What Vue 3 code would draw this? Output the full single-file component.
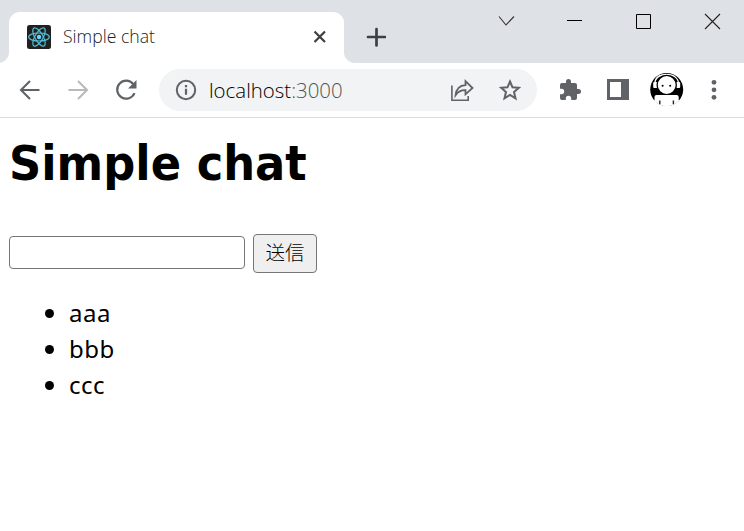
<script setup>
import { ref } from 'vue'

const messages = ref(['aaa', 'bbb', 'ccc'])
const draft = ref('')

function send() {
  if (!draft.value) return
  messages.value.push(draft.value)
  draft.value = ''
}
</script>

<template>
  <div class="window">
    <header class="tabstrip">
      <div class="tab">
        <svg class="favicon" viewBox="0 0 24 24">
          <rect width="24" height="24" rx="2.5" fill="#20201f" />
          <g fill="none" stroke="#53bdda" stroke-width="1.2">
            <ellipse cx="12" cy="12" rx="10.3" ry="4" />
            <ellipse cx="12" cy="12" rx="10.3" ry="4" transform="rotate(60 12 12)" />
            <ellipse cx="12" cy="12" rx="10.3" ry="4" transform="rotate(120 12 12)" />
          </g>
          <circle cx="12" cy="12" r="2.2" fill="#61dafb" />
        </svg>
        <span class="tab-title"><span class="fit">Simple chat</span></span>
        <svg class="tab-close" viewBox="0 0 14 14"><path d="M1.5 1.5 12 12M12 1.5 1.5 12" stroke="#3c4043" stroke-width="2.2" /></svg>
      </div>
      <svg class="plus" viewBox="0 0 20 20"><path d="M10.5 2V18.5M2 10H19" stroke="#3c4043" stroke-width="2.7" stroke-linecap="round" /></svg>
      <div class="controls">
        <svg viewBox="0 0 18 18"><path d="M2 4.5 9 13 17 4.5" fill="none" stroke="#333" stroke-width="1.1" /></svg>
        <svg viewBox="0 0 18 18"><path d="M1 8.5H16" stroke="#000" /></svg>
        <svg viewBox="0 0 18 18"><path d="M1.5 2.5H15.5V16.5H1.5Z" fill="none" stroke="#000" /></svg>
        <svg viewBox="0 0 18 18"><path d="M1 2 16 17M16 2 1 17" stroke="#222" stroke-width="1.1" /></svg>
      </div>
    </header>

    <nav class="toolbar">
      <svg class="nav-icon back" viewBox="0 0 24 24"><path d="M21.5 12H4M12 3 3 12 12 21" fill="none" stroke="#5f6368" stroke-width="2.1" /></svg>
      <svg class="nav-icon forward" viewBox="0 0 24 24"><path d="M2.5 12H20M12 3 21 12 12 21" fill="none" stroke="#bababa" stroke-width="2.1" /></svg>
      <svg class="nav-icon reload" viewBox="0 0 24 24">
        <path d="M19.2 6A9 9 0 1 0 20.5 15.1" fill="none" stroke="#5f6368" stroke-width="2.2" />
        <path d="M22.5 2V10.5H14Z" fill="#5f6368" />
      </svg>
      <div class="omnibox">
        <svg class="info" viewBox="0 0 22 22">
          <circle cx="11" cy="11" r="9.2" fill="none" stroke="#5f6368" stroke-width="2" />
          <path d="M11 6V8.2M11 9.8V15.8" stroke="#5f6368" stroke-width="2.2" />
        </svg>
        <span class="url"><span class="fit">localhost<span class="port">:3000</span></span></span>
        <svg class="share" viewBox="0 0 24 24" fill="none" stroke="#5f6368">
          <path d="M1.9 7.5V22.2H18.2V18" stroke-width="1.6" />
          <path d="M5.6 17.2C6.3 10.6 10 7.5 15.5 7.2V3.2L22.5 10 15.5 16.3V12.2C11 12 8.2 13.5 5.6 17.2Z" stroke-width="1.8" />
        </svg>
        <svg class="star" viewBox="0 0 24 24"><path d="M12 3.5 14.5 9.3 20.8 9.8 16 14 17.5 20.3 12 16.9 6.5 20.3 8 14 3.2 9.8 9.5 9.3Z" fill="none" stroke="#5f6368" stroke-width="2" /></svg>
      </div>
      <svg class="puzzle" viewBox="0 0 24 24"><path fill="#5f6368" d="M20.5 11H19V7a2 2 0 0 0-2-2h-4V3.5a2.5 2.5 0 0 0-5 0V5H4a2 2 0 0 0-2 2v3.8h1.5a2.7 2.7 0 0 1 0 5.4H2V20a2 2 0 0 0 2 2h3.8v-1.5a2.7 2.7 0 0 1 5.4 0V22H17a2 2 0 0 0 2-2v-4h1.5a2.5 2.5 0 0 0 0-5z" /></svg>
      <svg class="panel" viewBox="0 0 22 22"><path fill="#5f6368" fill-rule="evenodd" d="M0 0H22V21H0ZM3 3V18H14V3Z" /></svg>
      <svg class="avatar" viewBox="0 0 34 34">
        <defs><clipPath id="face"><circle cx="16.7" cy="16.5" r="16.5" /></clipPath></defs>
        <g clip-path="url(#face)">
          <rect width="34" height="34" fill="#000" />
          <path d="M4.7 12C4.7 5 9.5 1.5 16.7 1.5S28.7 5 28.7 12" fill="none" stroke="#fff" stroke-width="1.3" />
          <rect x="3.2" y="9" width="4" height="6" rx="1" fill="#fff" />
          <rect x="26.2" y="9" width="4" height="6" rx="1" fill="#fff" />
          <circle cx="16.7" cy="12" r="9.6" fill="#fff" stroke="#000" stroke-width="1.3" />
          <path d="M4.5 34V24Q4.5 22 6.5 22H26.5Q28.7 22 28.7 24V34Z" fill="#fff" />
          <rect y="27" width="34" height="7" fill="#fff" />
        </g>
        <path d="M9.8 27.5V31.2M23.4 27.5V31.2" stroke="#222" stroke-width="1.4" />
        <circle cx="12.6" cy="12.8" r="1" /><circle cx="20.2" cy="12.8" r="1" />
      </svg>
      <svg class="more" viewBox="0 0 6 22" fill="#5f6368"><circle cx="3" cy="3.3" r="2.4" /><circle cx="3" cy="10.8" r="2.4" /><circle cx="3" cy="18.3" r="2.4" /></svg>
    </nav>

    <main class="page">
      <h1><span class="fit">Simple chat</span></h1>
      <form class="composer" @submit.prevent="send">
        <input v-model="draft" class="message" type="text" />
        <button class="send" type="submit">送信</button>
      </form>
      <ul class="messages">
        <li v-for="(message, i) in messages" :key="i">{{ message }}</li>
      </ul>
    </main>
  </div>
</template>

<style>
body { margin: 0; background: #fff; }
</style>

<style scoped>
* { box-sizing: border-box; }
svg { display: block; flex: none; }
.window { width: 744px; height: 531px; overflow: hidden; background: #fff; color: #000; font-family: "Noto Sans", "Noto Sans CJK JP", sans-serif; }
.fit { display: inline-block; transform-origin: 0 50%; white-space: nowrap; }

.tabstrip { height: 63px; padding: 12px 0 0 9px; display: flex; background: #dee1e6; }
.tab { position: relative; width: 335px; height: 51px; padding: 0 17px 0 18px; display: flex; align-items: center; background: #fff; border-radius: 11px 11px 0 0; }
.tab::before, .tab::after { content: ""; position: absolute; bottom: 0; width: 11px; height: 11px; }
.tab::before { left: -11px; background: radial-gradient(circle at 0 0, transparent 10.5px, #fff 11.5px); }
.tab::after { right: -11px; background: radial-gradient(circle at 100% 0, transparent 10.5px, #fff 11.5px); }
.favicon { width: 24px; height: 24px; margin-bottom: 1px; }
.tab-title { margin: 0 0 4px 12px; flex: 1; color: #202326; font: 300 18px/26px "Open Sans", sans-serif; }
.tab-title .fit { transform: scaleX(.98); }
.tab-close { width: 14px; height: 14px; margin-bottom: 1px; }
.plus { width: 20px; height: 20px; margin: 15px 0 0 22px; }
.controls { margin: 0 22px 0 auto; display: flex; gap: 51px; }
.controls svg { width: 18px; height: 18px; }

.toolbar { height: 55px; display: flex; align-items: center; padding: 0 27px 0 18px; border-bottom: 1px solid #dadce0; background: #fff; }
.nav-icon { width: 24px; height: 24px; }
.forward, .reload { margin-left: 24px; }
.omnibox { width: 378px; height: 42px; margin-left: 21px; padding: 0 15px 0 16px; display: flex; align-items: center; border-radius: 21px; background: #f1f3f4; }
.info { width: 22px; height: 22px; }
.url { margin-left: 12px; flex: 1; color: #000; font: 300 21px/30px "Open Sans", sans-serif; }
.url .fit { transform: scaleX(.973); }
.port { color: #505356; }
.share { width: 24px; height: 24px; }
.star { width: 24px; height: 24px; margin-left: 24px; }
.puzzle { width: 24px; height: 24px; margin-left: 21px; }
.panel { width: 22px; height: 22px; margin-left: 25px; }
.avatar { width: 34px; height: 34px; margin: 0 0 1px 21px; }
.more { width: 6px; height: 22px; margin-left: auto; }

.page { padding: 0 9px; }
h1 { margin: 9px 0 0; font: 700 48px/72px "DejaVu Sans", sans-serif; }
h1 .fit { transform: scaleX(.933); }
.composer { display: flex; align-items: center; gap: 8px; margin-top: 35px; }
.message { width: 236px; height: 33px; margin-bottom: 2px; padding: 1px 3px; border: 1px solid #767676; border-radius: 4px; background: #fff; font: 20px "Noto Sans", sans-serif; outline: none; }
.send { width: 64px; height: 39px; padding: 0 0 3px; border: 1px solid #767676; border-radius: 4px; background: #efefef; color: #000; font: 300 19.5px/30px "Noto Sans CJK JP", sans-serif; }
.messages { margin: 22px 0 0; padding: 0 0 0 60px; list-style: disc; font-size: 24px; line-height: 36px; }
.messages li { height: 36px; letter-spacing: .5px; }
</style>
